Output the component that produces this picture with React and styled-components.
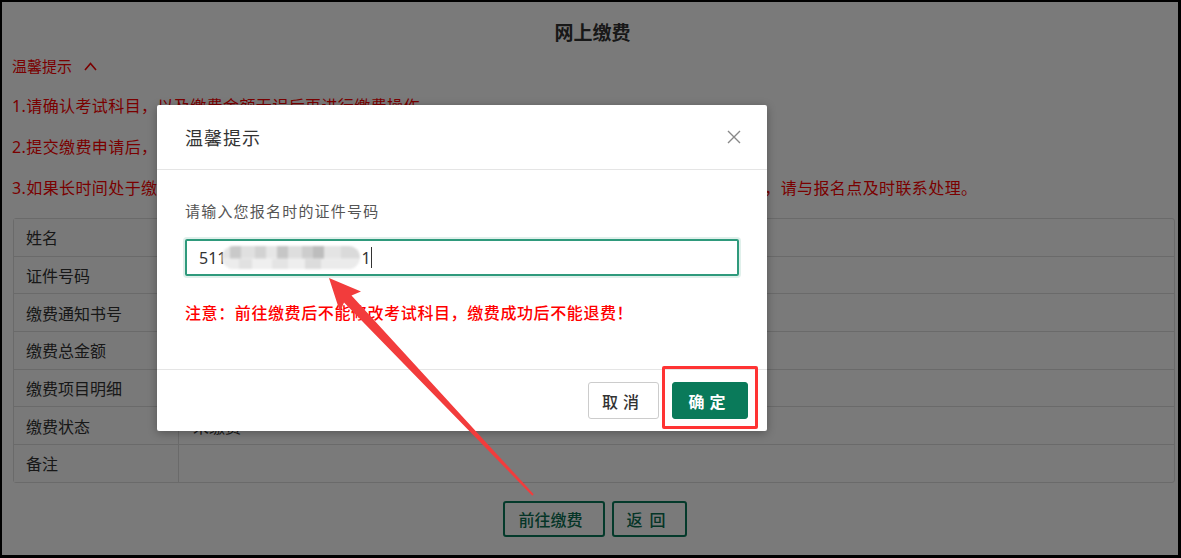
import React from 'react';
import styled, { createGlobalStyle } from 'styled-components';

const GlobalStyle = createGlobalStyle`
  html, body {
    margin: 0;
    padding: 0;
    background: #000;
  }
  body {
    font-family: "Noto Sans", "Noto Sans CJK SC", sans-serif;
  }
`;

const Frame = styled.div`
  position: relative;
  margin: 2px 3px 0 2px;
  width: 1176px;
  height: 553px;
  background: #fff;
  overflow: hidden;
`;

const Page = styled.main`
  display: flex;
  flex-direction: column;
  padding: 19px 5px 0 10px;
`;

const Title = styled.h1`
  margin: 0;
  text-align: center;
  font-size: 19px;
  line-height: 24px;
  font-weight: 700;
  color: #333;
`;

const TipToggle = styled.div`
  display: flex;
  align-items: center;
  gap: 12px;
  margin-top: 10px;
  font-size: 15px;
  line-height: 22px;
  color: #f00;
`;

const TipList = styled.ol`
  list-style: none;
  margin: 18px 0 0;
  padding: 0;
  display: flex;
  flex-direction: column;
  gap: 19px;
`;

const TipItem = styled.li`
  font-size: 16px;
  line-height: 22px;
  letter-spacing: 0.4px;
  color: #f00;
  white-space: nowrap;
`;

const InfoTable = styled.div`
  margin: 19px 0 0 1px;
  width: 1160px;
  border: 1px solid #ddd;
  border-radius: 3px;
`;

const Row = styled.div`
  display: grid;
  grid-template-columns: 165px 1fr;
  height: 36.7px;
  & + & {
    border-top: 1px solid #ddd;
  }
`;

const Label = styled.div`
  display: flex;
  align-items: center;
  padding-left: 12px;
  border-right: 1px solid #ddd;
  background: #fcfcfc;
  font-size: 16px;
  color: #333;
`;

const Value = styled.div`
  display: flex;
  align-items: center;
  padding-left: 14px;
  font-size: 16px;
  color: #333;
`;

const Actions = styled.div`
  display: flex;
  justify-content: center;
  gap: 7px;
  margin-top: 18px;
  padding-left: 4px;
`;

const OutlineButton = styled.button`
  width: ${p => p.$width}px;
  height: 36px;
  border: 2px solid #0a7a5a;
  border-radius: 3px;
  background: transparent;
  color: #0a7052;
  font-family: inherit;
  font-size: 16px;
  font-weight: 500;
  letter-spacing: ${p => p.$spacing || 0}px;
  padding-left: ${p => p.$spacing || 0}px;
`;

const Mask = styled.div`
  position: absolute;
  inset: 0;
  background: rgba(0, 0, 0, 0.52);
`;

const Dialog = styled.section`
  position: absolute;
  left: 155px;
  top: 103px;
  width: 610px;
  background: #fff;
  border-radius: 2px;
  box-shadow: 0 2px 10px rgba(0, 0, 0, 0.3);
`;

const DialogHeader = styled.header`
  display: flex;
  align-items: center;
  justify-content: space-between;
  height: 64px;
  padding: 0 25px 0 28px;
  border-bottom: 1px solid #e5e5e5;
`;

const DialogTitle = styled.h2`
  margin: 0;
  font-size: 18px;
  font-weight: 400;
  letter-spacing: 1px;
  color: #333;
`;

const CloseButton = styled.button`
  display: flex;
  padding: 0;
  border: 0;
  background: none;
`;

const DialogBody = styled.div`
  display: flex;
  flex-direction: column;
  padding: 31px 28px 45px;
`;

const FieldLabel = styled.label`
  font-size: 15px;
  line-height: 20px;
  letter-spacing: 1.2px;
  color: #555;
`;

const Field = styled.div`
  display: flex;
  align-items: center;
  box-sizing: border-box;
  height: 37px;
  margin-top: 18px;
  padding-left: 12px;
  border: 2px solid #2f9a7c;
  border-radius: 2px;
  box-shadow: 0 0 0 2px rgba(47, 154, 124, 0.15);
  font-size: 16px;
  color: #333;
`;

const Mosaic = styled.span`
  display: inline-block;
  width: 138px;
  height: 23px;
  margin: 0 1px 0 -4px;
  border-radius: 12px;
  background:
    linear-gradient(90deg, #e4e4e4 0 6%, #c9c9c9 6% 14%, #e0e0e0 14% 24%, #d2d2d2 24% 32%, #e6e6e6 32% 40%,
      #c6c6c6 40% 48%, #dedede 48% 58%, #cdcdcd 58% 66%, #bdbdbd 66% 74%, #e4e4e4 74% 86%, #dadada 86% 100%) top / 100% 55% no-repeat,
    linear-gradient(90deg, #ececec 0 12%, #e1e1e1 12% 22%, #efefef 22% 36%, #e4e4e4 36% 48%, #eeeeee 48% 60%,
      #dcdcdc 60% 72%, #ebebeb 72% 100%) bottom / 100% 45% no-repeat;
  filter: blur(1px);
`;

const Caret = styled.span`
  width: 1px;
  height: 21px;
  margin-left: 0;
  background: #333;
`;

const Warning = styled.p`
  margin: 26px 0 0;
  font-size: 16px;
  line-height: 22px;
  font-weight: 500;
  letter-spacing: 0.6px;
  color: #f00;
`;

const DialogFooter = styled.footer`
  display: flex;
  justify-content: flex-end;
  gap: 13px;
  padding: 12px 19px 12px 0;
  border-top: 1px solid #e5e5e5;
`;

const DialogButton = styled.button`
  width: ${p => p.$width}px;
  height: 37px;
  border-radius: 3px;
  border: 1px solid ${p => (p.$primary ? '#0a7a5a' : '#ccc')};
  background: ${p => (p.$primary ? '#0a7a5a' : '#fff')};
  color: ${p => (p.$primary ? '#fff' : '#333')};
  font-family: inherit;
  font-size: 16px;
  font-weight: ${p => (p.$primary ? 700 : 500)};
  letter-spacing: 5px;
  padding-left: 5px;
`;

const Highlight = styled.div`
  position: absolute;
  left: 660px;
  top: 364px;
  width: 96px;
  height: 63px;
  box-sizing: border-box;
  border: 3px solid #f33;
  border-radius: 2px;
`;

const Annotation = styled.svg`
  position: absolute;
  inset: 0;
  pointer-events: none;
`;

const rows = [
  ['姓名', ''],
  ['证件号码', ''],
  ['缴费通知书号', ''],
  ['缴费总金额', ''],
  ['缴费项目明细', ''],
  ['缴费状态', '未缴费'],
  ['备注', ''],
];

const tips = [
  '1.请确认考试科目，以及缴费金额无误后再进行缴费操作。',
  '2.提交缴费申请后，请在30分钟内完成支付，超时订单将自动取消。',
  '3.如果长时间处于缴费中状态，请勿重复提交缴费申请，如银行卡已经扣款但缴费状态长时间未更新成功，请与报名点及时联系处理。',
];

export default function App() {
  return (
    <>
      <GlobalStyle />
      <Frame>
        <Page>
          <Title>网上缴费</Title>
          <TipToggle>
            温馨提示
            <svg width="13" height="9" viewBox="0 0 13 9">
              <polyline points="1,8 6.5,1.5 12,8" fill="none" stroke="#f00" strokeWidth="1.6" />
            </svg>
          </TipToggle>
          <TipList>
            {tips.map(t => (
              <TipItem key={t}>{t}</TipItem>
            ))}
          </TipList>
          <InfoTable>
            {rows.map(([k, v]) => (
              <Row key={k}>
                <Label>{k}</Label>
                <Value>{v}</Value>
              </Row>
            ))}
          </InfoTable>
          <Actions>
            <OutlineButton $width={102}>前往缴费</OutlineButton>
            <OutlineButton $width={75} $spacing={7}>返回</OutlineButton>
          </Actions>
        </Page>

        <Mask />

        <Dialog>
          <DialogHeader>
            <DialogTitle>温馨提示</DialogTitle>
            <CloseButton aria-label="关闭">
              <svg width="16" height="16" viewBox="0 0 16 16">
                <path d="M2 2 L14 14 M14 2 L2 14" stroke="#888" strokeWidth="1.4" />
              </svg>
            </CloseButton>
          </DialogHeader>
          <DialogBody>
            <FieldLabel>请输入您报名时的证件号码</FieldLabel>
            <Field>
              511
              <Mosaic />
              1
              <Caret />
            </Field>
            <Warning>注意：前往缴费后不能修改考试科目，缴费成功后不能退费！</Warning>
          </DialogBody>
          <DialogFooter>
            <DialogButton $width={71}>取消</DialogButton>
            <DialogButton $width={76} $primary>确定</DialogButton>
          </DialogFooter>
        </Dialog>

        <Highlight />

        <Annotation width="1176" height="553" viewBox="0 0 1176 553">
          <polygon
            points="327,276 359,289.5 349.5,293.5 531.7,492.3 530.3,493.7 342,300.5 338,310"
            fill="#f23c3c"
          />
        </Annotation>
      </Frame>
    </>
  );
}
